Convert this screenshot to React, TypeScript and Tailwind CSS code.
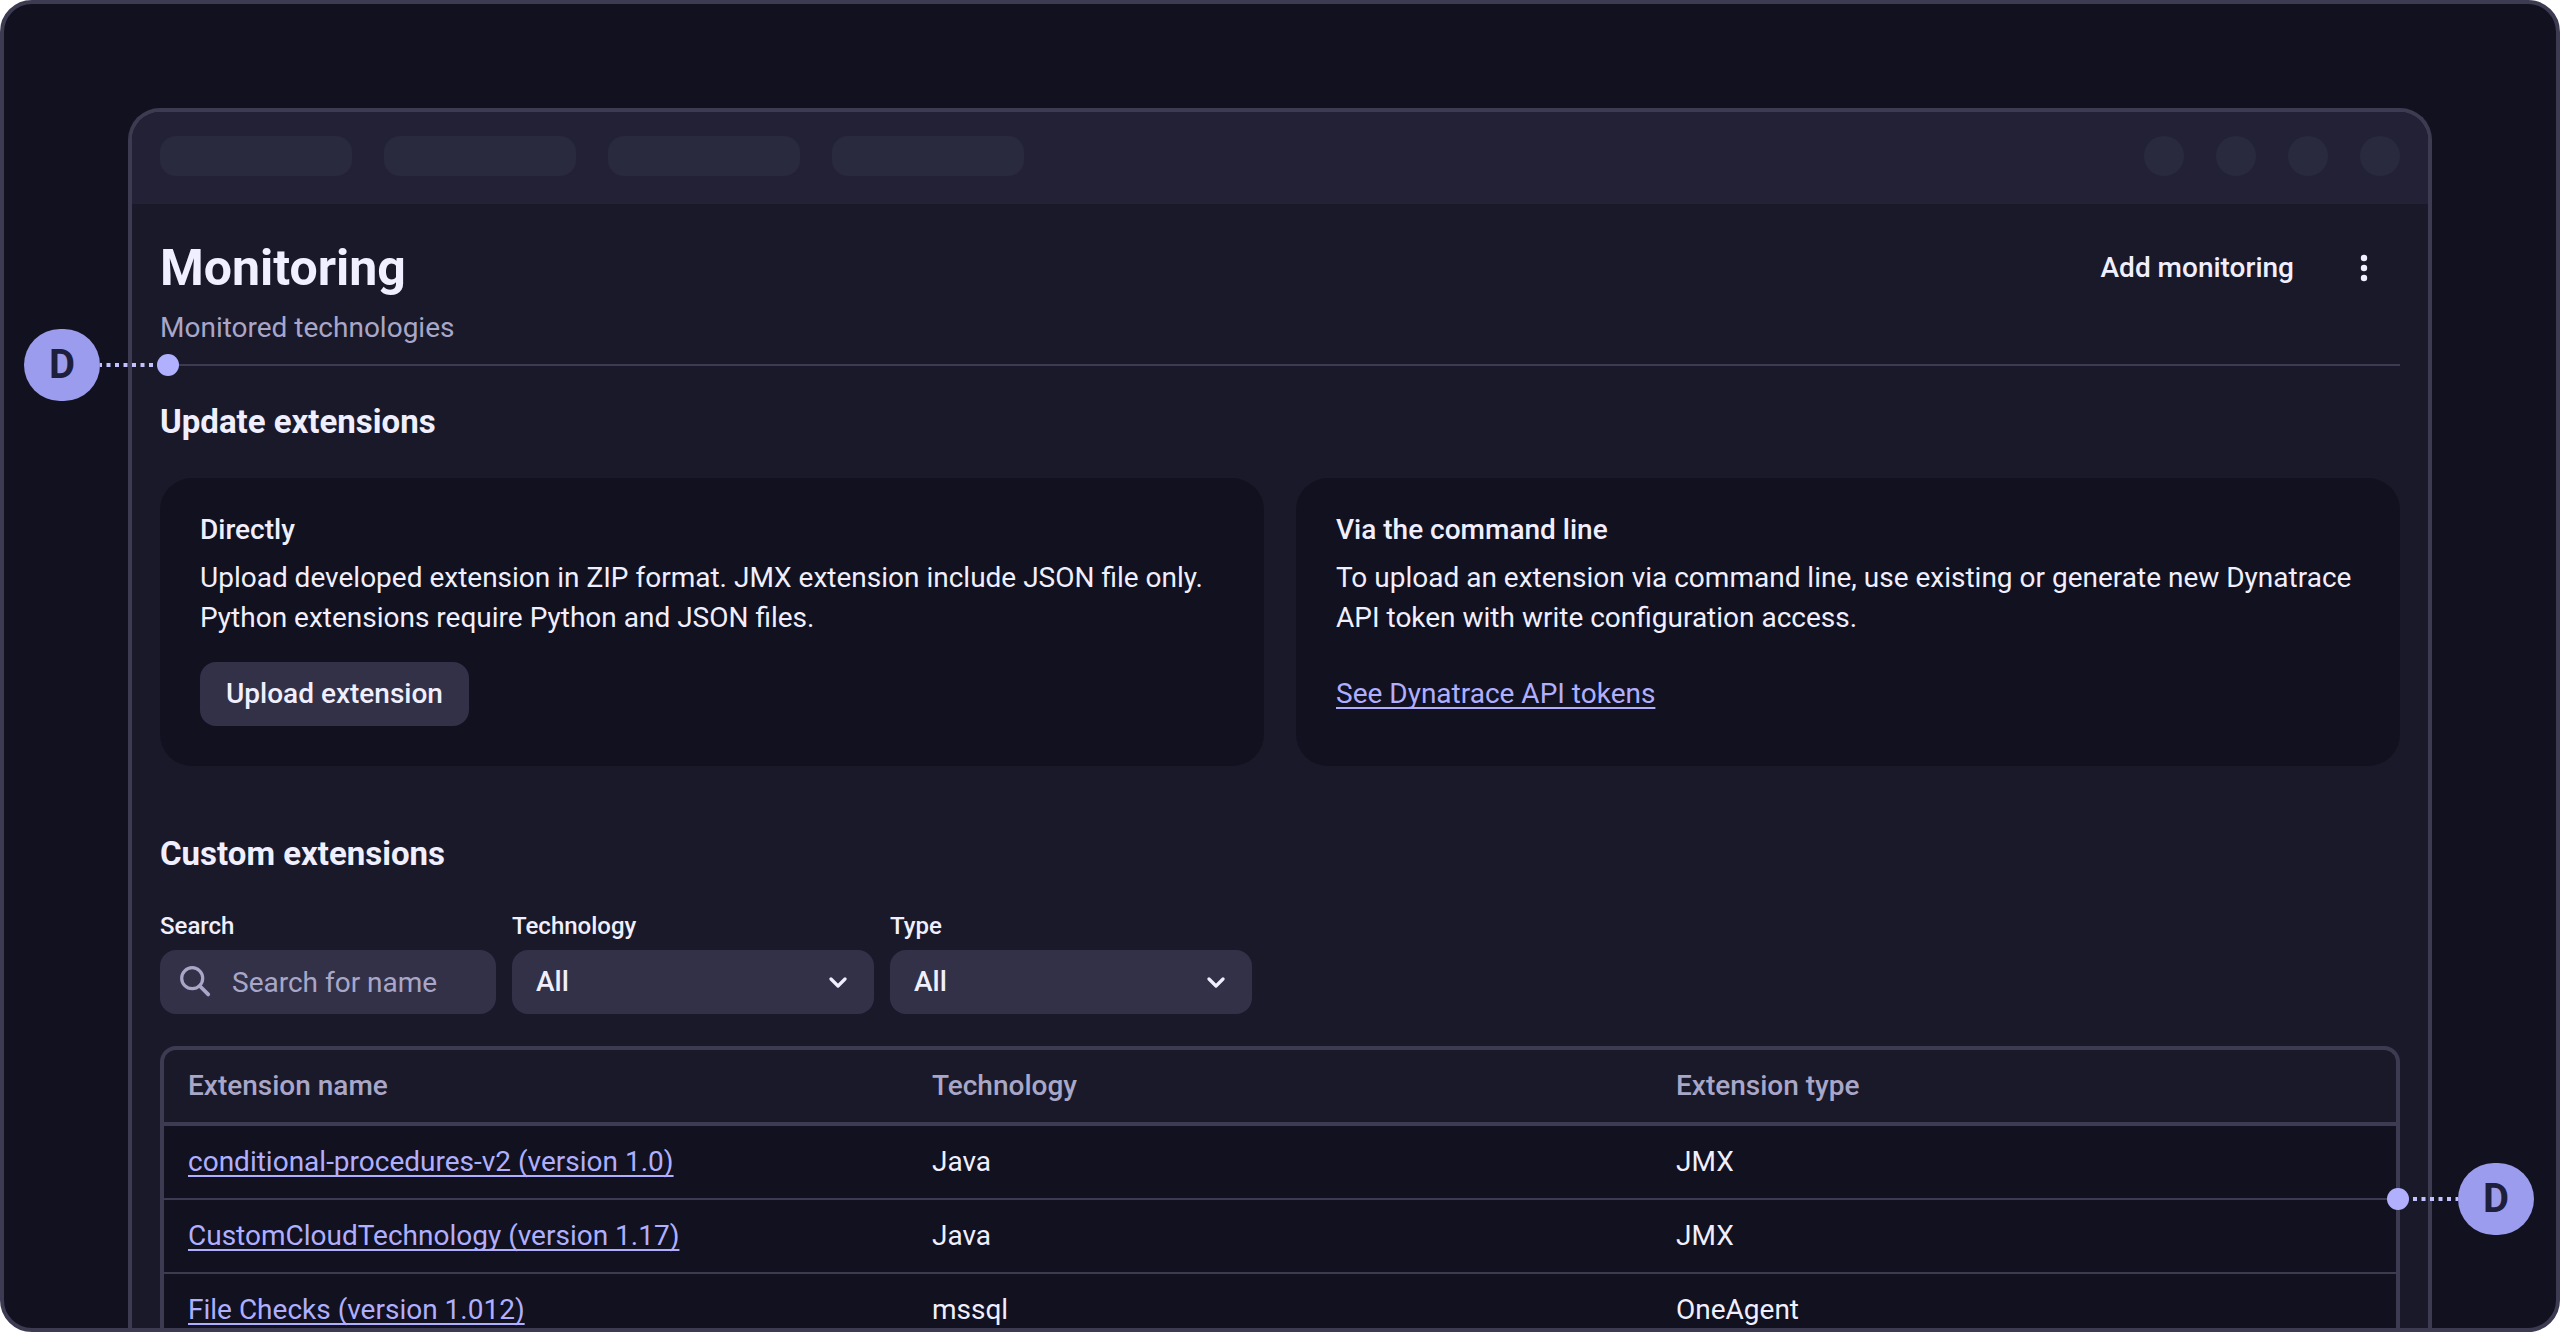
import type { ReactNode } from "react";

type Extension = { name: string; technology: string; type: string };

const EXTENSIONS: Extension[] = [
  { name: "conditional-procedures-v2 (version 1.0)", technology: "Java", type: "JMX" },
  { name: "CustomCloudTechnology (version 1.17)", technology: "Java", type: "JMX" },
  { name: "File Checks (version 1.012)", technology: "mssql", type: "OneAgent" },
];

const LINK = "text-[#b0afff] underline decoration-2 underline-offset-4 [text-decoration-skip-ink:none]";

function Badge({ children }: { children: ReactNode }) {
  return (
    <span className="flex h-[72px] w-[76px] shrink-0 items-center justify-center rounded-full bg-[#9c9cee] text-[40px] leading-none font-bold text-[#1e1f3a]">
      {children}
    </span>
  );
}

function Dot() {
  return <span className="size-[22px] shrink-0 rounded-full bg-[#b0b0ff]" />;
}

function Leader({ width, start }: { width: number; start: number }) {
  return (
    <svg width={width} height="4" className="shrink-0" aria-hidden="true">
      <line x1={start} y1="2" x2={width} y2="2" stroke="#c3c2ff" strokeWidth="4" strokeDasharray="4 4.5" strokeDashoffset={start === 0 ? 2 : 0} />
    </svg>
  );
}

function TopBar() {
  return (
    <div className="flex h-[92px] items-start justify-between rounded-t-[28px] bg-[#232135] px-7 pt-6">
      <div className="flex gap-8">
        {[0, 1, 2, 3].map((i) => (
          <span key={i} className="h-10 w-48 rounded-2xl bg-[#2a2a3e]" />
        ))}
      </div>
      <div className="flex gap-8">
        {[0, 1, 2, 3].map((i) => (
          <span key={i} className="size-10 rounded-full bg-[#2a2a3e]" />
        ))}
      </div>
    </div>
  );
}

function Header() {
  return (
    <header>
      <div className="flex h-16 items-center justify-between">
        <h1 className="text-[50px] leading-[64px] font-bold">Monitoring</h1>
        <div className="flex gap-2">
          <button type="button" className="h-16 rounded-2xl px-[26px] font-medium">
            Add monitoring
          </button>
          <button type="button" aria-label="More actions" className="flex h-16 w-[72px] items-center justify-center rounded-2xl">
            <svg width="8" height="28" viewBox="0 0 8 28" fill="currentColor" aria-hidden="true">
              <circle cx="4" cy="4" r="3.2" />
              <circle cx="4" cy="14" r="3.2" />
              <circle cx="4" cy="24" r="3.2" />
            </svg>
          </button>
        </div>
      </div>
      <p className="mt-2 text-[#a9a7c8]">Monitored technologies</p>
      <div className="relative mt-4 h-0.5 bg-[#3c3b52]">
        <div className="absolute top-1/2 -left-[136px] flex -translate-y-1/2 items-center">
          <Badge>D</Badge>
          <Leader width={57} start={0} />
          <Dot />
        </div>
      </div>
    </header>
  );
}

function Card({ title, text, children }: { title: string; text: string; children: ReactNode }) {
  return (
    <section className="rounded-[32px] bg-[#11111f] px-10 pt-8 pb-10">
      <h3 className="font-medium">{title}</h3>
      <p className="mt-2 mb-6">{text}</p>
      {children}
    </section>
  );
}

function SelectField({ id, label }: { id: string; label: string }) {
  return (
    <div className="flex w-[362px] flex-col gap-2">
      <label htmlFor={id} className="text-2xl leading-8 font-medium">
        {label}
      </label>
      <div className="relative">
        <select id={id} className="h-16 w-full appearance-none rounded-2xl bg-[#323148] px-6 font-medium text-[#f0efff]">
          <option>All</option>
        </select>
        <svg width="20" height="14" viewBox="0 0 20 14" className="pointer-events-none absolute top-6 right-[26px]" aria-hidden="true">
          <path d="M3 5 L10 12 L17 5" fill="none" stroke="#f0efff" strokeWidth="3.2" strokeLinecap="round" strokeLinejoin="round" />
        </svg>
      </div>
    </div>
  );
}

function Filters() {
  return (
    <div className="mt-9 flex gap-4">
      <div className="flex w-[336px] flex-col gap-2">
        <label htmlFor="search" className="text-2xl leading-8 font-medium">
          Search
        </label>
        <div className="flex h-16 items-center rounded-2xl bg-[#323148] pl-5">
          <svg width="32" height="32" viewBox="0 0 32 32" className="shrink-0" fill="none" stroke="#a9a7c8" strokeWidth="3.2" aria-hidden="true">
            <circle cx="12.2" cy="12.2" r="10.5" />
            <path d="M19.8 20 L28.2 28.4" strokeWidth="3.8" strokeLinecap="round" />
          </svg>
          <input
            id="search"
            type="text"
            placeholder="Search for name"
            className="ml-5 h-16 w-full min-w-0 bg-transparent text-[#f0efff] outline-none placeholder:text-[#a9a7c8]"
          />
        </div>
      </div>
      <SelectField id="technology" label="Technology" />
      <SelectField id="type" label="Type" />
    </div>
  );
}

function ExtensionTable() {
  return (
    <div className="mt-8 rounded-t-2xl border-4 border-b-0 border-[#3c3b52]">
      <table className="w-full table-fixed border-separate border-spacing-0 text-left">
        <thead>
          <tr>
            {["Extension name", "Technology", "Extension type"].map((heading) => (
              <th key={heading} scope="col" className="h-[76px] border-b-4 border-[#3c3b52] px-6 py-0 font-medium text-[#a9a7c8]">
                {heading}
              </th>
            ))}
          </tr>
        </thead>
        <tbody className="bg-[#11111f]">
          {EXTENSIONS.map((extension, index) => (
            <tr key={extension.name}>
              <td className="h-[74px] border-b-2 border-[#3c3b52] px-6 py-0">
                <a href="#extension" className={LINK}>
                  {extension.name}
                </a>
              </td>
              <td className="h-[74px] border-b-2 border-[#3c3b52] px-6 py-0">{extension.technology}</td>
              <td className="relative h-[74px] border-b-2 border-[#3c3b52] px-6 py-0">
                {extension.type}
                {index === 0 && (
                  <div className="absolute -right-[138px] -bottom-[37px] z-10 flex items-center">
                    <Dot />
                    <Leader width={49} start={4} />
                    <Badge>D</Badge>
                  </div>
                )}
              </td>
            </tr>
          ))}
        </tbody>
      </table>
    </div>
  );
}

export default function App() {
  return (
    <div className="h-screen overflow-hidden rounded-[32px] border-4 border-[#3c3b52] bg-[#11111f] px-[124px] pt-[104px] font-[Roboto,sans-serif] text-[28px] leading-10 text-[#f0efff]">
      <div className="min-h-full rounded-t-[32px] border-4 border-b-0 border-[#3c3b52] bg-[#1a192a]">
        <TopBar />
        <main className="px-7 pt-8">
          <Header />
          <h2 className="mt-9 text-[33px] font-bold">Update extensions</h2>
          <div className="mt-9 grid grid-cols-2 gap-8">
            <Card
              title="Directly"
              text="Upload developed extension in ZIP format. JMX extension include JSON file only. Python extensions require Python and JSON files."
            >
              <button type="button" className="h-16 rounded-2xl bg-[#323148] px-[26px] font-medium">
                Upload extension
              </button>
            </Card>
            <Card
              title="Via the command line"
              text="To upload an extension via command line, use existing or generate new Dynatrace API token with write configuration access."
            >
              <div className="flex h-16 items-center">
                <a href="#tokens" className={LINK}>
                  See Dynatrace API tokens
                </a>
              </div>
            </Card>
          </div>
          <h2 className="mt-[68px] text-[33px] font-bold">Custom extensions</h2>
          <Filters />
          <ExtensionTable />
        </main>
      </div>
    </div>
  );
}
